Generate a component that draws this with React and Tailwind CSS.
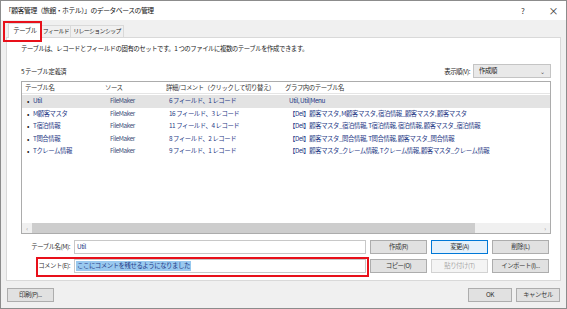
import React from "react";

const rows = [
  ["Util", "FileMaker", "6 フィールド、1 レコード", "Util, Util|Menu"],
  ["M顧客マスタ", "FileMaker", "16 フィールド、3 レコード", "【Del】顧客マスタ, M顧客マスタ, 宿泊情報_顧客マスタ, 顧客マスタ"],
  ["T宿泊情報", "FileMaker", "11 フィールド、4 レコード", "【Del】顧客マスタ_宿泊情報, T宿泊情報, 宿泊情報, 顧客マスタ_宿泊情報"],
  ["T問合情報", "FileMaker", "8 フィールド、2 レコード", "【Del】顧客マスタ_問合情報, T問合情報, 顧客マスタ_問合情報"],
  ["Tクレーム情報", "FileMaker", "9 フィールド、1 レコード", "【Del】顧客マスタ_クレーム情報, Tクレーム情報, 顧客マスタ_クレーム情報"],
];

function Btn({ children, className = "" }) {
  return (
    <div
      className={
        "h-[14px] flex items-center justify-center border border-[#adadad] bg-[#e1e1e1] text-[#333] whitespace-nowrap " +
        className
      }
    >
      {children}
    </div>
  );
}

export default function App() {
  return (
    <div
      className="relative w-[567px] h-[309px] bg-[#f0f0f0] border border-[#8c8c8c] flex flex-col text-[6.4px] tracking-[-0.45px] text-[#1a1a1a] overflow-hidden"
      style={{ fontFamily: '"Noto Sans CJK JP", "Noto Sans", sans-serif' }}
    >
      {/* title bar */}
      <div className="h-[19px] bg-white flex items-center pl-[4px] pr-[8px] shrink-0">
        <span className="text-[6.8px] text-[#111]">「顧客管理（旅館・ホテル）」のデータベースの管理</span>
        <span className="ml-auto text-[8px] text-[#333] mr-[24px]">?</span>
        <span className="text-[10px] text-[#333] leading-none">×</span>
      </div>

      {/* tabs */}
      <div className="h-[17px] flex items-end pl-[7px] shrink-0 relative z-10 whitespace-nowrap">
        <div className="h-[15px] w-[34px] bg-white border border-[#d9d9d9] border-b-0 flex items-center justify-center -mb-px">
          テーブル
        </div>
        <div className="h-[12px] w-[29px] bg-[#f0f0f0] border border-[#d9d9d9] border-b-0 border-l-0 flex items-center justify-center text-[5.9px] tracking-[-0.6px] overflow-hidden">
          フィールド
        </div>
        <div className="h-[12px] w-[53px] bg-[#f0f0f0] border border-[#d9d9d9] border-b-0 border-l-0 flex items-center justify-center text-[5.9px] tracking-[-0.6px] overflow-hidden">
          リレーションシップ
        </div>
      </div>

      {/* panel */}
      <div className="mx-[5px] h-[244px] bg-white border border-[#d9d9d9] flex flex-col pl-[14px] pr-[9px] shrink-0">
        <div className="h-[17px] flex items-center mt-[2px]">
          テーブルは、レコードとフィールドの固有のセットです。1 つのファイルに複数のテーブルを作成できます。
        </div>
        <div className="h-[24px] flex items-end pb-[3px]">
          <span className="mb-[1px]">5 テーブル定義済</span>
          <span className="ml-auto mr-[3px] mb-[1px]">表示順(V):</span>
          <div className="w-[78px] h-[14px] border border-[#c4c4c4] bg-[#e9e9e9] flex items-center px-[5px]">
            <span>作成順</span>
            <span className="ml-auto text-[6px] text-[#555]">⌄</span>
          </div>
        </div>

        {/* list */}
        <div className="h-[153px] border border-[#acacac] bg-white flex flex-col">
          <div className="h-[12px] grid grid-cols-[80px_61px_119px_1fr] items-center pl-[3px] border-b border-[#e5e5e5] text-[#333] whitespace-nowrap">
            <span>テーブル名</span>
            <span>ソース</span>
            <span>詳細/コメント（クリックして切り替え）</span>
            <span>グラフ内のテーブル名</span>
          </div>
          <div className="flex-1 flex flex-col pt-[1px]">
            {rows.map((r, i) => (
              <div
                key={i}
                className={
                  "h-[12.5px] grid grid-cols-[80px_61px_119px_1fr] items-center pl-[3px] text-[#1f3a86] whitespace-nowrap " +
                  (i === 0 ? "bg-[#e3e3e3]" : "")
                }
              >
                <span className="flex items-center">
                  <span className="w-[8px] pl-[2px] text-[#222] text-[7px]">•</span>
                  <span>{r[0]}</span>
                </span>
                <span className="pl-[5px] text-[#3d4f7a]">{r[1]}</span>
                <span className="pl-[3px]">{r[2]}</span>
                <span className="pl-[4px]">{r[3]}</span>
              </div>
            ))}
          </div>
          <div className="h-[10px] flex items-center bg-[#f0f0f0]">
            <div className="w-[10px] text-center text-[6px] text-[#999]">‹</div>
            <div className="w-[443px] h-full bg-[#cdcdcd]" />
            <div className="flex-1" />
            <div className="w-[10px] text-center text-[6px] text-[#999]">›</div>
          </div>
        </div>

        {/* form */}
        <div className="mt-[6px] flex items-center gap-[4px]">
          <span className="w-[49px] text-right text-[#333] whitespace-nowrap">テーブル名(M):</span>
          <div className="w-[292px] h-[14px] border border-[#c8c8c8] bg-white flex items-center px-[2px] text-[#1f3a86]">
            Util
          </div>
          <Btn className="w-[57px]">作成(R)</Btn>
          <Btn className="w-[57px] !border-[#0078d7] !bg-[#e5f1fb]">変更(A)</Btn>
          <Btn className="w-[57px]">削除(L)</Btn>
        </div>
        <div className="mt-[5px] flex items-center gap-[4px]">
          <span className="w-[49px] text-right text-[#333] whitespace-nowrap">コメント(E):</span>
          <div className="w-[292px] h-[14px] border border-[#c8c8c8] bg-white flex items-center px-[1px]">
            <span className="bg-[#99c9ef] text-[#1f3a86] px-[1px]">ここにコメントを残せるようになりました</span>
          </div>
          <Btn className="w-[57px]">コピー(O)</Btn>
          <Btn className="w-[57px] !bg-[#f4f4f4] !border-[#d2d2d2] !text-[#a8a8a8]">貼り付け(T)</Btn>
          <Btn className="w-[57px]">インポート(I)...</Btn>
        </div>
      </div>

      {/* bottom */}
      <div className="flex-1 flex items-center px-[6px]">
        <Btn className="w-[47px]">印刷(P)...</Btn>
        <Btn className="w-[44px] ml-auto">OK</Btn>
        <Btn className="w-[44px] ml-[4px]">キャンセル</Btn>
      </div>

      {/* red annotation boxes */}
      <div className="absolute left-[2px] top-[20px] w-[39px] h-[21px] border-2 border-[#e8101a] z-20" />
      <div className="absolute left-[35px] top-[256px] w-[333px] h-[20px] border-2 border-[#e8101a] z-20" />
    </div>
  );
}
